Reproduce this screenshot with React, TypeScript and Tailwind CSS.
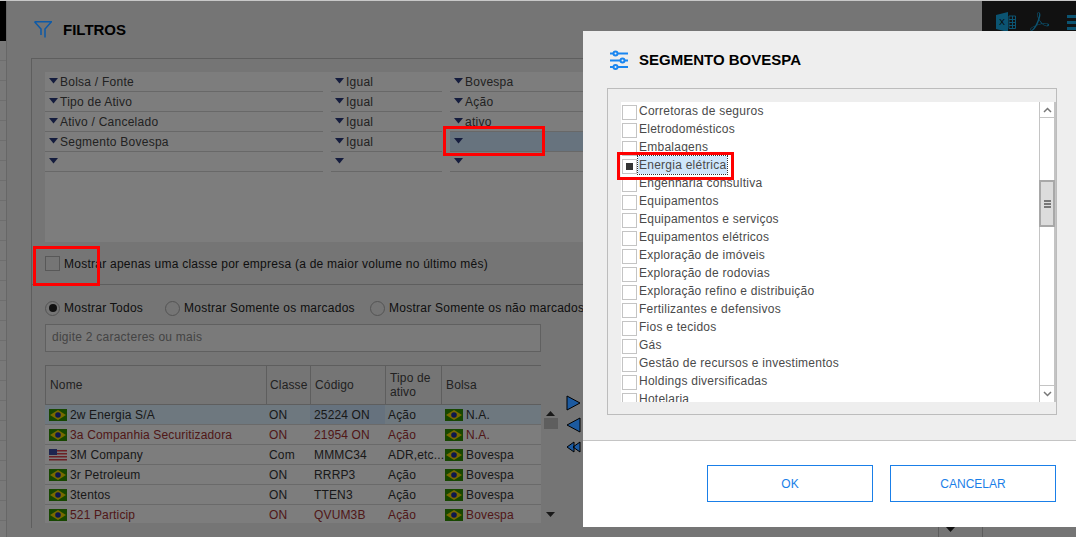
import React from 'react';
import { SiAdobeacrobatreader } from 'react-icons/si';

const filterRows = [
  ['Bolsa / Fonte', 'Igual', 'Bovespa'],
  ['Tipo de Ativo', 'Igual', 'Ação'],
  ['Ativo / Cancelado', 'Igual', 'ativo'],
  ['Segmento Bovespa', 'Igual', ''],
  ['', '', ''],
];

const companies = [
  { name: '2w Energia S/A', cls: 'ON', code: '25224 ON', type: 'Ação', market: 'N.A.', selected: true },
  { name: '3a Companhia Securitizadora', cls: 'ON', code: '21954 ON', type: 'Ação', market: 'N.A.', red: true },
  { name: '3M Company', cls: 'Com', code: 'MMMC34', type: 'ADR,etc...', market: 'Bovespa', us: true },
  { name: '3r Petroleum', cls: 'ON', code: 'RRRP3', type: 'Ação', market: 'Bovespa' },
  { name: '3tentos', cls: 'ON', code: 'TTEN3', type: 'Ação', market: 'Bovespa' },
  { name: '521 Particip', cls: 'ON', code: 'QVUM3B', type: 'Ação', market: 'Bovespa', red: true },
];

const segments = [
  'Corretoras de seguros',
  'Eletrodomésticos',
  'Embalagens',
  'Energia elétrica',
  'Engenharia consultiva',
  'Equipamentos',
  'Equipamentos e serviços',
  'Equipamentos elétricos',
  'Exploração de imóveis',
  'Exploração de rodovias',
  'Exploração refino e distribuição',
  'Fertilizantes e defensivos',
  'Fios e tecidos',
  'Gás',
  'Gestão de recursos e investimentos',
  'Holdings diversificadas',
  'Hotelaria',
];

const Caret = () => (
  <svg width="9" height="6" viewBox="0 0 9 6" className="shrink-0 mt-[-2px]">
    <path d="M0 0h9L4.500 5.500z" fill="#2b3a7c" />
  </svg>
);

const FilterCell = ({ text, active }: { text: string; active?: boolean }) => (
  <div className={`h-5 flex items-center gap-[2px] pl-[4px] border-b border-[#d0d0d0] ${active ? 'bg-[#cfe6fd]' : ''}`}>
    <Caret />
    <span>{text}</span>
  </div>
);

const BrazilFlag = () => (
  <svg width="18" height="12" viewBox="0 0 18 12" className="shrink-0">
    <rect width="18" height="12" fill="#2f8f00" />
    <path d="M9 1l8 5-8 5-8-5z" fill="#f2d500" />
    <circle cx="9" cy="6" r="2.800" fill="#1c2f9c" />
  </svg>
);

const UsFlag = () => (
  <svg width="18" height="12" viewBox="0 0 18 12" className="shrink-0">
    <rect width="18" height="12" fill="#f5f5f5" />
    <path d="M0 1h18v1.400H0zM0 4h18v1.400H0zM0 7h18v1.400H0zM0 10h18v1.400H0z" fill="#d9404a" />
    <rect width="8" height="6" fill="#3c4a9e" />
  </svg>
);

const Radio = ({ label, checked }: { label: string; checked?: boolean }) => (
  <div className="flex items-center gap-[4px]">
    <span className="w-[15px] h-[15px] rounded-full border border-[#a8a8a8] flex items-center justify-center">
      {checked && <span className="w-2 h-2 rounded-full bg-[#222]" />}
    </span>
    <span>{label}</span>
  </div>
);

const TriangleButton = ({ d }: { d: string }) => (
  <svg width="15" height="16" viewBox="0 0 15 16">
    <path d={d} fill="#1c5aa0" stroke="#000" strokeWidth="1" />
  </svg>
);

const App = () => {
  return (
    <div className="relative w-[1076px] h-[537px] overflow-hidden border-t border-[#c8c8c8] font-['Liberation_Sans',sans-serif] text-xs tracking-[0.25px] text-[#444]">
      <div className="flex h-full bg-[#eaeaea]">
        {/* left strip of the page behind */}
        <div className="w-[7px] shrink-0 border-r border-[#cfcfcf] bg-[#f2f2f2] overflow-hidden">
          <div className="h-10 bg-black" />
          {Array.from({ length: 25 }, (_, i) => (
            <div key={i} className="h-5 border-b border-[#dcdcdc]" />
          ))}
        </div>

        <div className="flex-1 min-w-0">
          {/* title bar */}
          <div className="h-[57px] flex items-center">
            <div className="flex items-center gap-[11px] pl-[27px] pt-[1px] flex-1">
              <svg width="18" height="17" viewBox="0 0 18 17" fill="none" stroke="#0d5aa8" strokeWidth="1.500" className="relative z-10">
                <path d="M0.500 0.800h17L11 8v8.500M0.500 0.800L7 8v6" />
              </svg>
              <span className="text-[15px] font-bold tracking-normal text-black">FILTROS</span>
            </div>
            <div className="w-[94px] h-[31px] self-start bg-[#222] flex items-end pl-[14px] overflow-hidden">
              <svg width="20" height="20" viewBox="0 0 20 20" className="shrink-0">
                <path d="M0 3l12-3v20L0 17z" fill="#16a8e4" />
                <path d="M13 4h6.500v12.500H13z" fill="none" stroke="#16a8e4" strokeWidth="1" />
                <path d="M13 7.500h7M13 10.500h7M13 13.500h7M16.500 4v13" stroke="#16a8e4" strokeWidth="1" />
                <text x="3" y="13" fontSize="9" fill="#111" fontFamily="Liberation Sans">X</text>
              </svg>
              <SiAdobeacrobatreader className="ml-[14px] mb-[1px] shrink-0 text-[#16a8e4]" size={19} />
              <div className="ml-[18px] mb-[2px] flex flex-col gap-[3px] w-[15px] shrink-0">
                <span className="h-[3px] bg-[#16a8e4]" />
                <span className="h-[3px] bg-[#16a8e4]" />
                <span className="h-[3px] bg-[#16a8e4]" />
              </div>
            </div>
          </div>

          {/* filter box */}
          <div className="ml-[24px] border-l border-t border-[#bdbdbd] h-[470px]">
            <div className="ml-[13px] mt-[13px] h-[170px] bg-[#fafafa] grid grid-cols-[278px_111px_1fr] gap-x-2 content-start">
              {filterRows.map((row, i) => (
                <React.Fragment key={i}>
                  <FilterCell text={row[0]} />
                  <FilterCell text={row[1]} />
                  <FilterCell text={row[2]} active={i === 3} />
                </React.Fragment>
              ))}
            </div>

            <div className="h-[43px] border-b border-[#bdbdbd] pl-[13px] pt-[1px] flex items-center gap-[4px] text-[#222]">
              <span className="w-[15px] h-[15px] border border-[#b0b0b0]" />
              <span>Mostrar apenas uma classe por empresa (a de maior volume no último mês)</span>
            </div>

            <div className="pl-[13px] pt-[15px] w-[509px] relative">
              <div className="grid grid-cols-[120px_205px_1fr] text-[#222] whitespace-nowrap">
                <Radio label="Mostrar Todos" checked />
                <Radio label="Mostrar Somente os marcados" />
                <Radio label="Mostrar Somente os não marcados" />
              </div>

              <div className="mt-[8px] h-[28px] border border-[#c0c0c0] bg-[#f4f4f4] flex items-center pl-[6px] pb-[2px] text-[#888]">
                digite 2 caracteres ou mais
              </div>

              {/* company table */}
              <div className="mt-[13px] w-[496px] tracking-[0.15px]">
                <div className="grid grid-cols-[221px_44px_75px_56px_100px] h-[40px] border-t border-b border-l border-[#bdbdbd] text-[#444]">
                  <div className="flex items-center pl-[4px] border-r border-[#bdbdbd]">Nome</div>
                  <div className="flex items-center pl-[3px] border-r border-[#bdbdbd]">Classe</div>
                  <div className="flex items-center pl-[4px] border-r border-[#bdbdbd]">Código</div>
                  <div className="flex items-center pl-[4px] leading-[14px] border-r border-[#bdbdbd]">Tipo de<br />ativo</div>
                  <div className="flex items-center pl-[4px]">Bolsa</div>
                </div>
                <div className="h-[118px] overflow-hidden">
                  {companies.map((c) => (
                    <div
                      key={c.name}
                      className={`grid grid-cols-[221px_44px_75px_56px_100px] h-5 items-center border-b border-[#d4d4d4] whitespace-nowrap ${
                        c.selected ? 'bg-[#dcf0ff]' : 'bg-[#fafafa]'
                      } ${c.red ? 'text-[#a03030]' : 'text-[#333]'}`}
                    >
                      <div className="flex items-center gap-[3px] pl-[4px]">
                        {c.us ? <UsFlag /> : <BrazilFlag />}
                        <span>{c.name}</span>
                      </div>
                      <div className="pl-[3px]">{c.cls}</div>
                      <div className={`pl-[4px] h-full flex items-center ${c.selected ? 'bg-[#cce4fc]' : ''}`}>{c.code}</div>
                      <div className="pl-[3px]">{c.type}</div>
                      <div className="flex items-center gap-[3px] pl-[4px]">
                        <BrazilFlag />
                        <span>{c.market}</span>
                      </div>
                    </div>
                  ))}
                </div>
              </div>

              {/* table scrollbar and move buttons */}
              <div className="absolute left-[510px] top-[124px] w-[17px] h-[112px] flex flex-col items-center">
                <svg width="9" height="5" viewBox="0 0 9 5" className="mt-[2px]"><path d="M0 5h9L4.500 0z" fill="#333" /></svg>
                <span className="w-[14px] h-[11px] bg-[#bdbdbd] mt-[2px]" />
                <svg width="9" height="5" viewBox="0 0 9 5" className="mt-auto mb-[4px]"><path d="M0 0h9L4.500 5z" fill="#333" /></svg>
              </div>
              <div className="absolute z-10 left-[534px] top-[110px] flex flex-col gap-[6px]">
                <TriangleButton d="M1 1l13 7-13 7z" />
                <TriangleButton d="M14 1L1 8l13 7z" />
                <TriangleButton d="M14 3L7 8l7 5zM8 3L1 8l7 5z" />
              </div>
            </div>
          </div>
        </div>
      </div>

      {/* dimming behind the dialog */}
      <div className="absolute inset-0 bg-black/50" />

      {/* column edge showing below the dialog */}
      <div className="absolute left-[938px] top-[526px] w-[45px] h-[11px] border-x border-[#5c5c5c] pl-[7px]">
        <svg width="9" height="5" viewBox="0 0 9 5" className="block"><path d="M0 0h9L4.500 5z" fill="#111" /></svg>
      </div>

      {/* dialog */}
      <div className="absolute z-20 left-[583px] top-[30px] w-[493px] h-[496px] flex flex-col bg-white">
        <div className="bg-[#eeeeee] h-[410px] border-b border-[#c4c4c4] flex flex-col">
          <div className="h-[57px] flex items-center gap-[11px] pl-[27px] shrink-0">
            <svg width="18" height="20" viewBox="0 0 18 20" fill="none" stroke="#1a86f0" strokeWidth="2">
              <path d="M0 3.500h3M8 3.500h10M0 10.500h10M15 10.500h3M0 17h3M8 17h10" />
              <circle cx="5.500" cy="3.500" r="2" />
              <circle cx="12.500" cy="10.500" r="2" />
              <circle cx="5.500" cy="17" r="2" />
            </svg>
            <span className="text-[15px] font-bold tracking-normal text-black">SEGMENTO BOVESPA</span>
          </div>

          <div className="ml-[24px] w-[450px] h-[327px] border border-[#bcbcbc] pl-[13px] pt-[13px] flex items-start">
            <div className="w-[418px] h-[300px] bg-white overflow-hidden">
              {segments.map((s, i) => {
                const on = i === 3;
                return (
                  <div key={s} className="h-[18px] flex items-start whitespace-nowrap text-[#4a4a4a]">
                    <span className={`ml-[1px] mt-[3px] w-[15px] h-[15px] shrink-0 border border-[#c4c4c4] bg-white flex items-center justify-center ${on ? 'relative z-10' : ''}`}>
                      {on && <span className="w-[7px] h-[7px] bg-[#333]" />}
                    </span>
                    <span className={`h-[18px] leading-[18px] ${on ? 'bg-[#cfe6fb] outline-1 outline-dotted outline-[#333] ml-[1px] px-[1px]' : 'ml-[2px]'}`}>{s}</span>
                  </div>
                );
              })}
            </div>

            <div className="w-[17px] h-[300px] border-l border-r-2 border-[#c4c4c4] bg-white flex flex-col">
              <div className="h-4 border-b border-[#c4c4c4] flex items-center justify-center">
                <svg width="9" height="6" viewBox="0 0 9 6" fill="none" stroke="#777" strokeWidth="1.500"><path d="M1 5l3.500-3.500L8 5" /></svg>
              </div>
              <div className="mt-[62px] -ml-[1px] -mr-[1px] h-[47px] bg-[#dcdcdc] border-2 border-[#a8a8a8] flex flex-col items-center justify-center gap-[1px]">
                <span className="w-[7px] h-[2px] bg-[#777]" />
                <span className="w-[7px] h-[2px] bg-[#777]" />
                <span className="w-[7px] h-[2px] bg-[#777]" />
              </div>
              <div className="mt-auto h-[17px] border-t border-[#c4c4c4] flex items-center justify-center">
                <svg width="9" height="6" viewBox="0 0 9 6" fill="none" stroke="#777" strokeWidth="1.500"><path d="M1 1l3.500 3.500L8 1" /></svg>
              </div>
            </div>
          </div>
        </div>

        <div className="flex-1 flex items-start justify-end gap-[17px] pt-[24px] pr-[20px] tracking-normal">
          <button className="w-[166px] h-[37px] border border-[#1a7fe8] text-[#1a7fe8]">OK</button>
          <button className="w-[166px] h-[37px] border border-[#1a7fe8] text-[#1a7fe8]">CANCELAR</button>
        </div>
      </div>

      {/* red markers drawn on the screenshot */}
      <div className="absolute z-30 left-[443px] top-[125px] w-[102px] h-[30px] border-[3px] border-[#ff0000]" />
      <div className="absolute z-30 left-[33px] top-[245px] w-[67px] h-[40px] border-[3px] border-[#ff0000]" />
      <div className="absolute z-30 left-[617px] top-[151px] w-[117px] h-[28px] border-[3px] border-[#ff0000]" />
    </div>
  );
};

export default App;
